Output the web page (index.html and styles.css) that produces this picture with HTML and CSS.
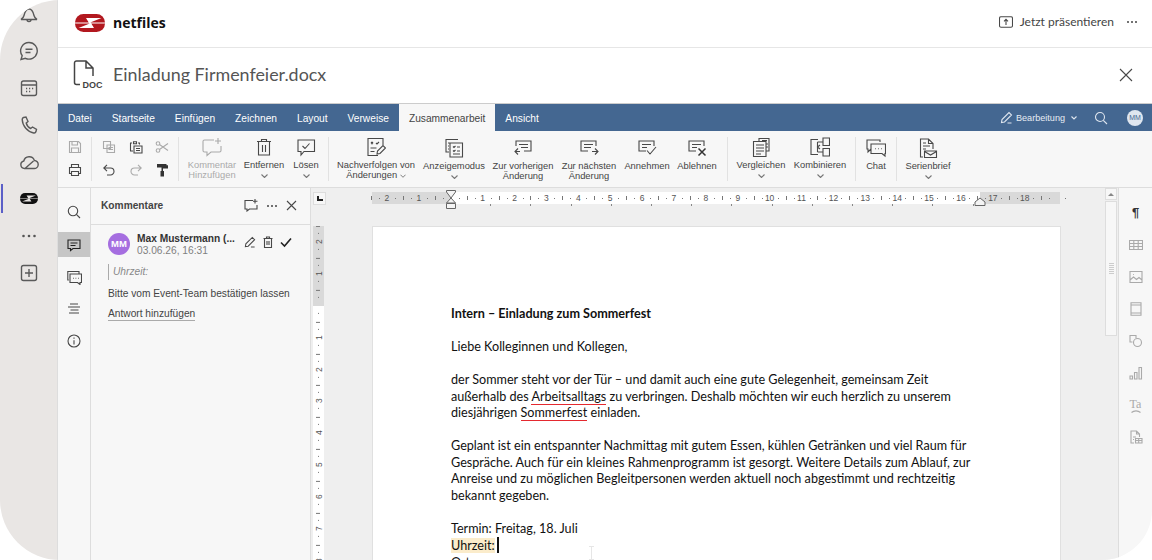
FILE: index.html
```html
<!DOCTYPE html>
<html>
<head>
  <title>netfiles - Einladung Firmenfeier.docx</title>
  <link rel="stylesheet" href="styles.css">
</head>
<body>
<div class="app">

  <!-- main side navigation -->
  <nav class="sidenav">
    <div class="nav-item"><svg class="ico" width="20" height="20" viewBox="0 0 20 20"><path d="M2 15.500c2-1 2.500-2 3-4 .7-3 2-6.500 5-6.500s4.300 3.500 5 6.500c.5 2 1 3 3 4zM8 15.500c0 2.800 4 2.800 4 0"/></svg></div>
    <div class="nav-item"><svg class="ico" width="20" height="20" viewBox="0 0 20 20"><path d="M10 1.500a8.300 8.300 0 1 1-3.600 15.800L2 18.500l1.200-3.900A8.300 8.300 0 0 1 10 1.500zM6.500 8.200h7M6.500 11.500h5"/></svg></div>
    <div class="nav-item"><svg class="ico" width="20" height="20" viewBox="0 0 20 20"><rect x="2.500" y="3" width="15" height="14.500" rx="2"/><path d="M2.500 7h15M7 10.500h1.200M10 10.500h1.200M13 10.500h1.200M7 13.500h1.200M10 13.500h1.200"/></svg></div>
    <div class="nav-item"><svg class="ico" width="20" height="20" viewBox="0 0 20 20"><path d="M4.500 2.500 7 2l2 4.500-1.800 1.500c.6 2.500 2.300 4.500 4.500 5.500l1.800-1.500 4 2.300-.6 2.500c-.3.900-1.200 1.400-2.200 1.200C8.500 16.800 3.500 11 3.200 4.500c0-1 .5-1.700 1.300-2z"/></svg></div>
    <div class="nav-item"><svg class="ico" width="20" height="20" viewBox="0 0 20 20"><path d="M5.500 16.500a3.800 3.800 0 0 1-.7-7.500 5.500 5.500 0 0 1 10.600-.5 4 4 0 0 1-.4 8zM6 16.500 14.500 9"/></svg></div>
    <div class="nav-item nav-active"><svg width="18" height="11" viewBox="0 0 30 18"><rect width="30" height="18" rx="8.500" fill="#111"/><path d="M0 8.400H30V9.600H0zM3.500 14 16 9l3 5zM26.500 4 14 9l-3-5z" fill="#e9e6e4"/></svg></div>
    <div class="nav-item"><svg width="20" height="20" viewBox="0 0 20 20" fill="#555"><circle cx="4.500" cy="10" r="1.300"/><circle cx="10" cy="10" r="1.300"/><circle cx="15.500" cy="10" r="1.300"/></svg></div>
    <div class="nav-item"><svg class="ico" width="20" height="20" viewBox="0 0 20 20"><rect x="2.500" y="2.500" width="15" height="15" rx="2"/><path d="M10 6v8M6 10h8"/></svg></div>
  </nav>

  <div class="main">

    <header class="topbar">
      <div class="logo">
        <svg width="30" height="18" viewBox="0 0 30 18"><rect width="30" height="18" rx="8.500" fill="#b2181f"/><path d="M0 8.400H30V9.600H0zM3.500 14 16 9l3 5zM26.500 4 14 9l-3-5z" fill="#fff"/></svg>
      </div>
      <span class="brand">netfiles</span>
      <div class="present">
        <svg class="ico" width="14" height="12" viewBox="0 0 14 12"><rect x=".5" y=".8" width="13" height="10.400" rx="1.500"/><path d="M7 9V3.500M5 5.300l2-2 2 2"/></svg>
        <span>Jetzt präsentieren</span>
      </div>
      <div class="more-dots"><i></i><i></i><i></i></div>
    </header>

    <div class="titlebar">
      <svg class="doc-icon" width="30" height="29" viewBox="0 0 30 29"><path d="M7 24.500H3.500a2 2 0 0 1-2-2V3a2 2 0 0 1 2-2H13l7 7v8M13 1v7h7" fill="none" stroke="#444" stroke-width="1.500"/><text x="9.500" y="27.500" class="doc-text">DOC</text></svg>
      <span class="doc-name">Einladung Firmenfeier.docx</span>
      <svg class="ico close" width="16" height="16" viewBox="0 0 16 16"><path d="M2 2l12 12M14 2 2 14"/></svg>
    </div>

    <div class="tabbar">
      <span class="tab">Datei</span>
      <span class="tab">Startseite</span>
      <span class="tab">Einfügen</span>
      <span class="tab">Zeichnen</span>
      <span class="tab">Layout</span>
      <span class="tab">Verweise</span>
      <span class="tab tab-active">Zusammenarbeit</span>
      <span class="tab">Ansicht</span>
      <div class="tabbar-right">
        <svg class="ico" width="13" height="13" viewBox="0 0 13 13"><path d="M1.500 11.500l.5-3L9 1.500l2.500 2.500-7 7zM7.500 12h4"/></svg>
        <span class="mode">Bearbeitung</span>
        <svg class="ico chev-w" width="6" height="4" viewBox="0 0 6 4"><path d="M.5.5 3 3 5.500.5"/></svg>
        <svg class="ico search-w" width="14" height="14" viewBox="0 0 14 14"><circle cx="6" cy="6" r="4.500"/><path d="M9.300 9.300 13 13"/></svg>
        <span class="avatar-small">MM</span>
      </div>
    </div>

    <div class="toolbar">
      <div class="tgroup tg-file">
        <svg class="ico off" width="14" height="14" viewBox="0 0 14 14"><path d="M1.500 1.500h9l2 2v9h-11zM4 1.500v3.500h5.500v-3.500M3.500 12.500v-4.500h7v4.500"/></svg>
        <svg class="ico" width="14" height="14" viewBox="0 0 14 14"><path d="M3.500 4V1.500h7V4M3.500 10.500h-2V4.500h11v6h-2M3.500 8.500h7v4h-7z"/></svg>
      </div>
      <div class="tgroup tg-edit">
        <svg class="ico off" width="14" height="14" viewBox="0 0 14 14"><path d="M1.500 1.500h7v7h-7zM5 5h7.500v7.500H5zM6.500 7.500h4.500M6.500 9.500h4.500"/></svg>
        <svg class="ico" width="14" height="14" viewBox="0 0 14 14"><path d="M3 3H1.500v8H4M9 3h1.500v1.500M4.500 1.800h3v2h-3zM5 6h8v7H5zM7 8.500h4M7 10.500h4"/></svg>
        <svg class="ico off" width="14" height="14" viewBox="0 0 14 14"><circle cx="3" cy="3.500" r="1.800"/><circle cx="3" cy="10.500" r="1.800"/><path d="M4.500 4.500 13 10.500M4.500 9.500 13 3.500"/></svg>
        <svg class="ico" width="14" height="14" viewBox="0 0 14 14"><path d="M5 1.800 1.800 5 5 8.200M2 5h6.500a3.500 3.500 0 0 1 0 7H5"/></svg>
        <svg class="ico off" width="14" height="14" viewBox="0 0 14 14"><path d="M9 1.800 12.200 5 9 8.200M12 5H5.500a3.500 3.500 0 0 0 0 7H9"/></svg>
        <svg width="14" height="14" viewBox="0 0 14 14" fill="#333"><path d="M2 1h9.500v1.200H13v3.300H8V8H9v5.500H5.500V8h1V4.200h5V3.200H11.500V4.500H2z"/></svg>
      </div>
      <div class="tgroup tg-comment">
        <div class="tool off w60">
          <svg class="ico" width="22" height="20" viewBox="0 0 22 20"><path d="M13 3H3.500a1.500 1.500 0 0 0-1.500 1.500v9A1.500 1.500 0 0 0 3.500 15H6v3.500l4-3.500h8.500a1.500 1.500 0 0 0 1.500-1.500V9M17 1v6M14 4h6"/></svg>
          <span>Kommentar<br>Hinzufügen</span>
        </div>
        <div class="tool w44">
          <svg class="ico" width="20" height="20" viewBox="0 0 20 20"><path d="M3 4.500h14M7.500 4.500V2.500h5v2M4.500 4.500v13.500h11V4.500M8.500 8v7M11.500 8v7"/></svg>
          <span>Entfernen</span>
          <svg class="ico chev" width="7" height="4" viewBox="0 0 7 4"><path d="M.5.5l3 3 3-3"/></svg>
        </div>
        <div class="tool w40">
          <svg class="ico" width="20" height="20" viewBox="0 0 20 20"><path d="M2 3h16.500v11.500H8L5 18v-3.500H2zM6.500 9l2.500 2.500 4.500-5"/></svg>
          <span>Lösen</span>
          <svg class="ico chev" width="7" height="4" viewBox="0 0 7 4"><path d="M.5.5l3 3 3-3"/></svg>
        </div>
      </div>
      <div class="tgroup tg-track">
        <div class="tool w82">
          <svg class="ico" width="20" height="20" viewBox="0 0 20 20"><path d="M17 8V1.500H2v17h10M5 5l2 2M7 5 5 7M10 6l1 1 2-2M4.500 11h6M4.500 14.500h4M11 17l.5-3 5.500-5.500 2.500 2.500L14 16.500z"/></svg>
          <span>Nachverfolgen von<br>Änderungen <svg class="ico chev-in" width="6" height="4" viewBox="0 0 7 4"><path d="M.5.5l3 3 3-3"/></svg></span>
        </div>
        <div class="tool tool-low w74">
          <svg class="ico" width="20" height="20" viewBox="0 0 20 20"><path d="M14 1.500H2V14h3M6 5h12.500v14H6zM9 8.500l1 1 1.500-1.500M13 9h3M9 12.500l1 1 1.500-1.500M13 13h3M9 16h7M4 5h5M4 8h1M4 11h1"/></svg>
          <span>Anzeigemodus</span>
          <svg class="ico chev" width="7" height="4" viewBox="0 0 7 4"><path d="M.5.5l3 3 3-3"/></svg>
        </div>
        <div class="tool tool-low w64">
          <svg class="ico" width="20" height="20" viewBox="0 0 20 20"><path d="M3 8V3h15v10h-7M6 6.500h9M8 9.500h7M7 13.500H2M5 10.500l-3 3 3 3" /></svg>
          <span>Zur vorherigen<br>Änderung</span>
        </div>
        <div class="tool tool-low w68">
          <svg class="ico" width="20" height="20" viewBox="0 0 20 20"><path d="M9 13H2V3h15v5M5 6.500h9M5 9.500h7M13 13.500h6M16 10.500l3 3-3 3"/></svg>
          <span>Zur nächsten<br>Änderung</span>
        </div>
        <div class="tool tool-low w48">
          <svg class="ico" width="20" height="20" viewBox="0 0 20 20"><path d="M9 13H2V3h15v5M5 6.500h9M5 9.500h5M10 12.500l3 3.500 6-7"/></svg>
          <span>Annehmen</span>
        </div>
        <div class="tool tool-low w52">
          <svg class="ico" width="20" height="20" viewBox="0 0 20 20"><path d="M9 13H2V3h15v5M5 6.500h9M5 9.500h5"/><path class="thick" d="M11.500 10.500l7 7M18.500 10.500l-7 7"/></svg>
          <span>Ablehnen</span>
        </div>
      </div>
      <div class="tgroup tg-compare">
        <div class="tool w60">
          <svg class="ico" width="20" height="20" viewBox="0 0 20 20"><path d="M8 4V1.500h10V14h-3M2.500 4.500h12.500v15H2.500zM5 8h8M5 11h8M5 14h8M5 17h5M11 3.500h5M15.500 7h1.500M15.500 10h1.500"/></svg>
          <span>Vergleichen</span>
          <svg class="ico chev" width="7" height="4" viewBox="0 0 7 4"><path d="M.5.5l3 3 3-3"/></svg>
        </div>
        <div class="tool w58">
          <svg class="ico" width="20" height="20" viewBox="0 0 20 20"><path d="M8 2.500H1v15h7M13 1h6.500v7.500H13zM13 11.500h6.500V19H13zM13 5H7.500M13 15H7.500M7.500 5v10M10 8l-2.500 2 2.500 2"/></svg>
          <span>Kombinieren</span>
          <svg class="ico chev" width="7" height="4" viewBox="0 0 7 4"><path d="M.5.500l3 3 3-3"/></svg>
        </div>
      </div>
      <div class="tgroup tg-chat">
        <div class="tool tool-low w40">
          <svg class="ico" width="20" height="20" viewBox="0 0 20 20"><path d="M14 4V2H1v9h1v3l3-3M5 6h14.500v9.500H19v2.500l-3-2.500H5zM9 10.800h.8M12 10.800h.8M15 10.800h.8"/></svg>
          <span>Chat</span>
        </div>
      </div>
      <div class="tgroup tg-last">
        <div class="tool tool-low w62">
          <svg class="ico" width="20" height="20" viewBox="0 0 20 20"><path d="M5 19H2.500V1h8l4.500 4.500V11M10.500 1v4.500H15M5 5h3M5 8h7M5 11h3M6.500 13h12v6.500h-12zM6.500 13.500l6 3.500 6-3.500"/></svg>
          <span>Serienbrief</span>
          <svg class="ico chev" width="7" height="4" viewBox="0 0 7 4"><path d="M.5.5l3 3 3-3"/></svg>
        </div>
      </div>
    </div>

    <div class="workspace">

      <div class="leftrail">
        <div class="rail-btn"><svg class="ico" width="14" height="14" viewBox="0 0 14 14"><circle cx="6" cy="6" r="4.700"/><path d="M9.400 9.400 13 13"/></svg></div>
        <div class="rail-btn rail-active"><svg class="ico dark" width="14" height="14" viewBox="0 0 14 14"><path d="M1 2h12v8.500H6l-2.500 2v-2H1zM3.500 5h7M3.500 7.500h5"/></svg></div>
        <div class="rail-btn"><svg class="ico" width="15" height="15" viewBox="0 0 15 15"><path d="M12 3.500V1.500H.8v8.500h1M3 4h11.500v8.500H13v2l-2.500-2H3zM6 8.200h.8M8.500 8.200h.8M11 8.200h.8"/></svg></div>
        <div class="rail-btn"><svg class="ico" width="14" height="14" viewBox="0 0 14 14"><path d="M3 2h8M1 5h12M3.500 8h8M2 11h10"/></svg></div>
        <div class="rail-btn"><svg class="ico" width="14" height="14" viewBox="0 0 14 14"><circle cx="7" cy="7" r="6"/><path d="M7 6.300V10.500M7 3.500v1.200"/></svg></div>
      </div>

      <aside class="comments">
        <div class="comments-head">
          <span class="comments-title">Kommentare</span>
          <svg class="ico ch-add" width="14" height="13" viewBox="0 0 14 13"><path d="M9 1.500H1v8.500h2v2l2.500-2H13V6M11 0v4.500M9 2.200h4.500"/></svg>
          <div class="more-dots ch-more"><i></i><i></i><i></i></div>
          <svg class="ico ch-close" width="11" height="11" viewBox="0 0 11 11"><path d="M1 1l9 9M10 1l-9 9"/></svg>
        </div>
        <div class="comment">
          <div class="comment-top">
            <span class="avatar">MM</span>
            <div class="comment-who">
              <div class="comment-name">Max Mustermann (...</div>
              <div class="comment-date">03.06.26, 16:31</div>
            </div>
            <svg class="ico" width="12" height="12" viewBox="0 0 13 13"><path d="M1.500 11.500l.5-3L9 1.500l2.500 2.500-7 7zM7.500 12h4"/></svg>
            <svg class="ico" width="12" height="12" viewBox="0 0 12 12"><path d="M1.500 2.500h9M4.500 2.500V1h3v1.500M2.500 2.500v9h7v-9M5 5v4M7 5v4"/></svg>
            <svg class="check" width="12" height="12" viewBox="0 0 12 12"><path d="M1 6.500 4.500 10 11 2.500"/></svg>
          </div>
          <div class="comment-quote">Uhrzeit:</div>
          <div class="comment-text">Bitte vom Event-Team bestätigen lassen</div>
          <span class="comment-reply">Antwort hinzufügen</span>
        </div>
      </aside>

      <div class="editor">
        <div class="editor-main">
          <div class="ruler-row">
            <div class="ruler-corner"><i></i></div>
            <div class="hruler">
              <span class="first">2</span><span>1</span><span></span><span>1</span><span>2</span><span>3</span><span>4</span><span>5</span><span>6</span><span>7</span><span>8</span><span>9</span><span>10</span><span>11</span><span>12</span><span>13</span><span>14</span><span>15</span><span>16</span><span>17</span><span>18</span><span></span>
              <svg class="marker-left" width="12" height="20" viewBox="0 0 12 20"><path d="M1.500.5h9V2L6 8 1.500 2zM6 8l4.500 5H1.500zM1.500 13.500h9v5h-9z" fill="#f4f4f4" stroke="#666"/></svg>
              <svg class="marker-right" width="12" height="9" viewBox="0 0 12 9"><path d="M1 8.500V5L6 1l5 4v3.500z" fill="#f4f4f4" stroke="#666"/></svg>
            </div>
          </div>
          <div class="page-row">
            <div class="vruler">
              <span>2</span><span>1</span><span></span><span>1</span><span>2</span><span>3</span><span>4</span><span>5</span><span>6</span><span>7</span><span>8</span>
            </div>
            <div class="page">
              <div class="para"><b>Intern – Einladung zum Sommerfest</b></div>
              <div class="para">Liebe Kolleginnen und Kollegen,</div>
              <div class="para">der Sommer steht vor der Tür – und damit auch eine gute Gelegenheit, gemeinsam Zeit<br>
                außerhalb des <span class="spell">Arbeitsalltags</span> zu verbringen. Deshalb möchten wir euch herzlich zu unserem<br>
                diesjährigen <span class="spell">Sommerfest</span> einladen.</div>
              <div class="para">Geplant ist ein entspannter Nachmittag mit gutem Essen, kühlen Getränken und viel Raum für<br>
                Gespräche. Auch für ein kleines Rahmenprogramm ist gesorgt. Weitere Details zum Ablauf, zur<br>
                Anreise und zu möglichen Begleitpersonen werden aktuell noch abgestimmt und rechtzeitig<br>
                bekannt gegeben.</div>
              <div>Termin: Freitag, 18. Juli</div>
              <div><mark>Uhrzeit:</mark> <span class="caret"></span></div>
              <div>Ort:</div>
              <svg class="ibeam" width="7" height="14" viewBox="0 0 7 14"><path d="M1 .5h5M3.500.5v13M1 13.500h5" fill="none" stroke="#e6e6e6"/></svg>
            </div>
          </div>
        </div>
        <div class="scrollbar">
          <div class="scroll-up"><i></i></div>
          <div class="scroll-thumb"><i></i></div>
        </div>
      </div>

      <div class="rightrail">
        <div class="rail-btn pilcrow">¶</div>
        <div class="rail-btn"><svg class="ico off" width="14" height="14" viewBox="0 0 14 14"><path d="M.5 2.500h13v9H.5zM.5 5.500h13M.5 8.500h13M4.800 2.500v9M9.200 2.500v9"/></svg></div>
        <div class="rail-btn"><svg class="ico off" width="14" height="14" viewBox="0 0 14 14"><path d="M1 1.500h12v11H1zM1 10l3.500-3 3 2.500 2.500-2 3 2.500M4 4.500h.8"/></svg></div>
        <div class="rail-btn"><svg class="ico off" width="14" height="14" viewBox="0 0 14 14"><path d="M2 .8h10v12.400H2zM2 3h10M2 11h10"/></svg></div>
        <div class="rail-btn"><svg class="ico off" width="14" height="14" viewBox="0 0 14 14"><path d="M7 4V1.500H1V8h2.500"/><circle cx="8.500" cy="8.500" r="4"/></svg></div>
        <div class="rail-btn"><svg class="ico off" width="14" height="14" viewBox="0 0 14 14"><path d="M1 10h2.500v3H1zM5.500 6.500H8V13H5.500zM10 1.500h2.500V13H10z"/></svg></div>
        <div class="rail-btn rail-ta"><span class="ta">Ta</span><svg class="ico off" width="10" height="3" viewBox="0 0 10 3"><path d="M.5 2.500C3 .3 7 .3 9.500 2.500"/></svg></div>
        <div class="rail-btn"><svg class="ico off" width="14" height="14" viewBox="0 0 14 14"><path d="M5 13H2V1h5.500L10.500 4v3M7.500 1v3h3M4 7h3M4 9.500h1M6.500 8.500h6.500v4.500H6.500zM6.500 10.500h6.500M9.700 8.500v4.500"/></svg></div>
      </div>
    </div>
  </div>
</div>
</body>
</html>
```

FILE: styles.css
```css
* {
  box-sizing: border-box;
}

html, body {
  margin: 0;
  height: 100%;
  background-color: #fff;
  overflow: hidden;
}

body {
  font-family: "Liberation Sans", Arial, sans-serif;
  color: #444;
}

.app {
  display: flex;
  width: 1152px;
  height: 560px;
  border-radius: 60px 0 50px 60px;
  overflow: hidden;
}

.ico {
  fill: none;
  stroke: #484848;
  stroke-width: 1.100;
  flex: none;
}

.ico.off, .off .ico {
  stroke: #aaa;
}

.ico.dark {
  stroke: #222;
}

.thick {
  stroke: #333;
  stroke-width: 1.500;
}

.more-dots {
  display: flex;
  gap: 2px;
}

.more-dots i {
  width: 2px;
  height: 2px;
  border-radius: 50%;
  background-color: #444;
}

/* Side navigation */

.sidenav {
  flex: none;
  width: 57px;
  background-color: #e9e6e4;
  margin-top: -5px;
  height: 565px;
}

.sidenav .ico {
  stroke: #5a5a5a;
  stroke-width: 1.400;
}

.nav-item {
  display: flex;
  align-items: center;
  justify-content: center;
  height: 37px;
  position: relative;
}

.nav-active::before {
  content: "";
  position: absolute;
  left: 1px;
  top: 4px;
  width: 2px;
  height: 29px;
  background-color: #5b5fc7;
}

/* Main column */

.main {
  flex: 1;
  min-width: 0;
  display: flex;
  flex-direction: column;
  border-left: 1px solid #ddd;
  background-color: #fff;
}

.topbar {
  flex: none;
  display: flex;
  align-items: center;
  height: 48px;
  border-bottom: 1px solid #e6e6e6;
  padding: 0 15px 3px 17px;
}

.logo {
  display: flex;
  align-items: center;
  justify-content: center;
  width: 30px;
  height: 28px;
  margin: 2px 8px 0 0;
  border-radius: 7px;
  background-color: #fff;
}

.brand {
  font-family: "Open Sans", sans-serif;
  font-weight: 700;
  font-size: 14px;
  color: #111;
}

.present {
  display: flex;
  align-items: center;
  gap: 7px;
  margin: 0 0 1px auto;
  font-family: Lato, sans-serif;
  font-size: 12px;
  color: #444;
}

.topbar .more-dots {
  margin-left: 13px;
}

.titlebar {
  flex: none;
  display: flex;
  align-items: center;
  height: 55px;
  padding: 0 18px 2px 15px;
}

.doc-text {
  font-family: "Liberation Sans", sans-serif;
  font-size: 9px;
  font-weight: 700;
  fill: #444;
}

.doc-name {
  font-family: Lato, sans-serif;
  font-size: 17.900px;
  color: #555;
  margin: 0 0 2px 10px;
}

.close {
  margin-left: auto;
}

/* Tabs */

.tabbar {
  flex: none;
  display: flex;
  align-items: flex-end;
  height: 28px;
  border-top: 1px solid #ccc;
  background-color: #446791;
  padding-left: 0;
  font-size: 10.200px;
  color: #fff;
}

.tab {
  height: 27px;
  line-height: 30px;
  padding: 0 10px;
}

.tab-active {
  background-color: #f7f7f7;
  color: #444;
}

.tabbar-right {
  display: flex;
  align-items: center;
  height: 27px;
  margin-left: auto;
  padding-right: 9px;
}

.tabbar-right .ico {
  stroke: #dfe6ef;
}

.mode {
  font-size: 9.100px;
  margin-left: 3px;
  color: #e6ecf3;
}

.chev-w {
  margin-left: 6px;
}

.search-w {
  margin-left: 17px;
}

.avatar-small {
  width: 16px;
  height: 16px;
  margin-left: 19px;
  border-radius: 50%;
  background-color: #dfe6ef;
  color: #446791;
  font-size: 7px;
  line-height: 16px;
  text-align: center;
}

/* Toolbar */

.toolbar {
  flex: none;
  display: flex;
  height: 57px;
  background-color: #f7f7f7;
  border-bottom: 1px solid #ddd;
  font-size: 9.350px;
  color: #444;
}

.tgroup {
  display: flex;
  position: relative;
  padding-top: 6px;
}

.tgroup::after {
  content: "";
  position: absolute;
  right: 0;
  top: 6px;
  bottom: 6px;
  width: 1px;
  background-color: #e2e2e2;
}

.tg-file {
  width: 34px;
  flex-direction: column;
  align-items: center;
  gap: 9px;
  padding-top: 9px;
}

.tg-edit {
  width: 87px;
  display: grid;
  grid-template-columns: 26.500px 26.500px 26.500px;
  justify-items: center;
  align-content: start;
  row-gap: 9px;
  padding: 9px 0 0 4px;
}

.tg-comment {
  width: 150px;
  padding-left: 3px;
}

.tg-track {
  width: 399px;
  padding-left: 6px;
}

.tg-compare {
  width: 128px;
  padding-left: 3px;
}

.tg-chat {
  width: 41px;
}

.tg-last::after {
  display: none;
}

.tool {
  display: flex;
  flex-direction: column;
  align-items: center;
  flex: none;
  text-align: center;
  line-height: 10px;
  white-space: nowrap;
}

.tool span {
  margin-top: 3px;
}

.tool .chev {
  margin-top: 4px;
  stroke: #777;
}

.chev-in {
  stroke: #777;
}

.tool-low > .ico:first-child {
  margin-top: 1px;
}

.off {
  color: #aaa;
}

.w40 { width: 40px; }
.w44 { width: 44px; }
.w48 { width: 48px; }
.w52 { width: 52px; }
.w58 { width: 58px; }
.w60 { width: 60px; }
.w62 { width: 62px; }
.w64 { width: 64px; }
.w68 { width: 68px; }
.w74 { width: 74px; }
.w82 { width: 82px; }

/* Workspace below the toolbar */

.workspace {
  flex: 1;
  min-height: 0;
  display: flex;
  background-color: #f7f7f7;
}

.leftrail {
  flex: none;
  width: 33px;
  border-right: 1px solid #ddd;
  padding-top: 8px;
  display: flex;
  flex-direction: column;
}

.rail-btn {
  display: flex;
  align-items: center;
  justify-content: center;
  height: 32px;
}

.rail-active {
  height: 25px;
  margin: 4px 0;
  background-color: #c6c6c6;
}

/* Comments panel */

.comments {
  flex: none;
  width: 220px;
  border-right: 1px solid #ddd;
  font-size: 10.200px;
}

.comments-head {
  display: flex;
  align-items: center;
  height: 37px;
  border-bottom: 1px solid #ddd;
  padding: 0 13px 1px 10px;
}

.comments-title {
  font-weight: 700;
  color: #444;
}

.ch-add {
  margin-left: auto;
}

.ch-more {
  margin: 0 9px 0 9px;
}

.comment {
  padding: 8px 0 0 17px;
}

.comment-top {
  display: flex;
  align-items: center;
  height: 22px;
}

.comment-top .ico,
.check {
  margin-bottom: 4px;
}

.comment-top .ico + .ico {
  margin-left: 6px;
}

.avatar {
  flex: none;
  width: 22px;
  height: 22px;
  border-radius: 50%;
  background-color: #a56ee0;
  color: #fff;
  font-weight: 700;
  font-size: 9.500px;
  line-height: 22px;
  text-align: center;
  margin-right: 7px;
}

.comment-who {
  width: 107px;
  white-space: nowrap;
}

.comment-name {
  font-weight: 700;
  color: #333;
  line-height: 12px;
}

.comment-date {
  color: #808080;
  line-height: 11px;
}

.check {
  margin-left: 6px;
  fill: none;
  stroke: #222;
  stroke-width: 1.600;
}

.comment-quote {
  margin-top: 9px;
  height: 16px;
  line-height: 15px;
  border-left: 1px solid #aaa;
  padding-left: 4px;
  font-style: italic;
  color: #888;
}

.comment-text {
  margin-top: 7px;
  line-height: 13px;
  color: #444;
}

.comment-reply {
  display: inline-block;
  margin-top: 7px;
  line-height: 13px;
  border-bottom: 1px solid #aaa;
}

/* Editor with rulers and page */

.editor {
  flex: 1;
  min-width: 0;
  display: flex;
  background-color: #efefef;
}

.editor-main {
  flex: 1;
  min-width: 0;
  display: flex;
  flex-direction: column;
}

.ruler-row {
  flex: none;
  display: flex;
  height: 38px;
  padding-left: 2px;
}

.ruler-corner {
  flex: none;
  width: 13px;
  height: 13px;
  margin-top: 4px;
  background-color: #f7f7f7;
  border: 1px solid #ddd;
  padding: 3px;
}

.ruler-corner i {
  display: block;
  width: 6px;
  height: 5px;
  border-left: 2px solid #222;
  border-bottom: 2px solid #222;
}

.hruler {
  position: relative;
  flex: none;
  display: flex;
  width: 688px;
  height: 12px;
  margin: 4px 0 0 46px;
  background:
    linear-gradient(#d9d9d9, #d9d9d9) 0 0 / 79px 100% no-repeat,
    linear-gradient(#d9d9d9, #d9d9d9) 608px 0 / 80px 100% no-repeat,
    #fff;
  font-size: 8.500px;
  color: #555;
}

.hruler::after {
  content: "";
  position: absolute;
  left: 79px;
  top: 12px;
  width: 529px;
  height: 2px;
  background: repeating-linear-gradient(to right, transparent 0, transparent 39.200px, #888 39.200px, #888 40.200px);
}

.hruler span {
  flex: none;
  width: 31.900px;
  line-height: 12px;
  text-align: center;
  background:
    linear-gradient(#777, #777) 0 4px / 1px 4px no-repeat,
    linear-gradient(#777, #777) 8px 6px / 1px 1px no-repeat,
    linear-gradient(#777, #777) 24px 6px / 1px 1px no-repeat;
}

.hruler .first {
  margin-left: -1px;
}

.marker-left {
  position: absolute;
  left: 73px;
  top: -2px;
}

.marker-right {
  position: absolute;
  left: 602px;
  top: 5px;
}

.page-row {
  flex: 1;
  min-height: 0;
  display: flex;
  padding-left: 2px;
  overflow: hidden;
}

.vruler {
  flex: none;
  width: 11px;
  height: 352px;
  background: linear-gradient(#d9d9d9, #d9d9d9) 0 0 / 100% 80px no-repeat, #fff;
  font-size: 8.500px;
  color: #555;
}

.vruler span {
  display: flex;
  align-items: center;
  justify-content: center;
  width: 11px;
  height: 31.900px;
  writing-mode: vertical-rl;
  transform: rotate(180deg);
  background:
    linear-gradient(#777, #777) 4px 100% / 4px 1px no-repeat,
    linear-gradient(#777, #777) 5px 8px / 1px 1px no-repeat,
    linear-gradient(#777, #777) 5px 24px / 1px 1px no-repeat;
}

.page {
  position: relative;
  flex: none;
  width: 689px;
  margin-left: 48px;
  background-color: #fff;
  border: 1px solid #e0e0e0;
  border-bottom: none;
  padding: 79px 0 0 78px;
  font-family: Lato, sans-serif;
  font-size: 12.620px;
  line-height: 16.500px;
  color: #111;
  white-space: nowrap;
}

.para {
  margin-bottom: 16.500px;
}

.spell {
  border-bottom: 1px solid #e4292f;
}

.page mark {
  background-color: #fbeccb;
  color: #111;
}

.caret {
  display: inline-block;
  width: 2px;
  height: 16px;
  margin-left: -1px;
  background-color: #111;
  vertical-align: -3px;
}

.ibeam {
  position: absolute;
  left: 215px;
  top: 319px;
}

.scrollbar {
  flex: none;
  width: 13px;
  padding-right: 1px;
}

.scroll-up {
  display: flex;
  align-items: center;
  justify-content: center;
  height: 12px;
  background-color: #f7f7f7;
  border: 1px solid #ddd;
}

.scroll-up i {
  border-left: 3px solid transparent;
  border-right: 3px solid transparent;
  border-bottom: 3px solid #888;
}

.scroll-thumb {
  display: flex;
  align-items: center;
  justify-content: center;
  height: 135px;
  margin-top: 1px;
  background-color: #f7f7f7;
  border: 1px solid #ddd;
}

.scroll-thumb i {
  width: 5px;
  height: 11px;
  background: repeating-linear-gradient(#ccc 0, #ccc 1px, transparent 1px, transparent 2px);
}

/* Right rail */

.rightrail {
  flex: none;
  width: 34px;
  border-left: 1px solid #ddd;
  padding-top: 9px;
}

.pilcrow {
  font-size: 13px;
  font-weight: 700;
  color: #333;
  padding-bottom: 2px;
}

.rail-ta {
  flex-direction: column;
}

.ta {
  font-family: "Liberation Serif", serif;
  font-size: 12px;
  color: #aaa;
  line-height: 12px;
}
```
